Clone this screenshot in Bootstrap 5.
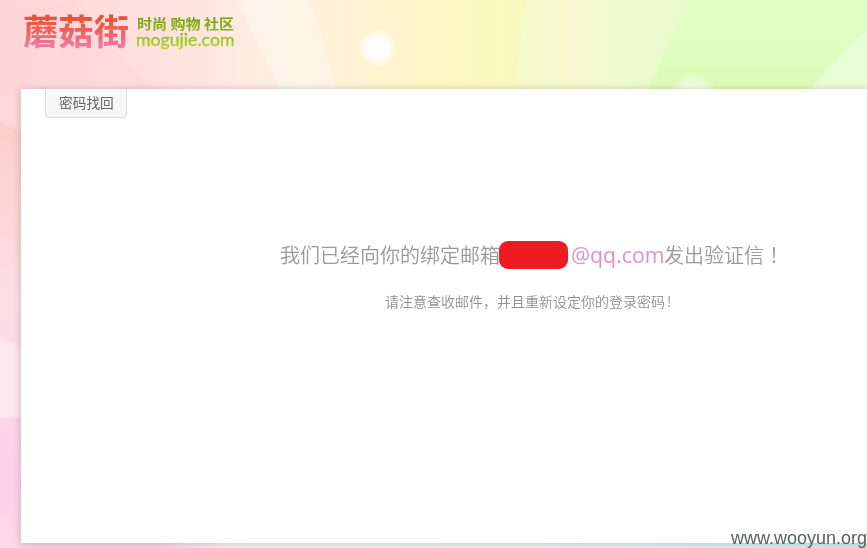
<!DOCTYPE html>
<html lang="zh-CN">
<head>
<meta charset="utf-8">
<meta name="viewport" content="width=device-width, initial-scale=1">
<title>蘑菇街 - 密码找回</title>
<link rel="stylesheet" href="https://cdn.jsdelivr.net/npm/bootstrap@5.3.0/dist/css/bootstrap.min.css">
<style>
body { font-family: "Liberation Sans", "Noto Sans CJK SC", sans-serif; color: #999; }
.stage { display: grid; grid-template: 548px / 867px; width: 867px; }
.stage > * { grid-area: 1 / 1; }
.page-head { height: 89px; padding: 8px 0 0 20px; }
.sheet { height: 454px; margin-left: 21px; box-shadow: 0 1px 8px rgba(90, 80, 80, .32); }
.tab-label { width: 82px; height: 29px; margin-left: 24px; background: #f7f7f7; border: 1px solid #ddd; border-top: 0; border-radius: 0 0 4px 4px; font-size: 13.7px; line-height: 29px; color: #666; padding-left: 13px; white-space: nowrap; }
.notice { margin: 121px 0 0 259px; height: 32px; line-height: 32px; font-size: 20px; font-weight: 350; font-family: "Noto Sans CJK SC", sans-serif; white-space: nowrap; }
.redacted { width: 69px; height: 28px; margin: 0 3px 0 -1px; background: #ed1c24; border-radius: 9px; }
.mail-host { width: 93px; color: #e890bd; font: 21.3px/32px "Open Sans", sans-serif; }
.centred-mark { font-family: "Noto Sans CJK TC", sans-serif; }
.hint { margin: 18px 0 0 364px; font-size: 14px; line-height: 24px; font-weight: 350; font-family: "Noto Sans CJK SC", sans-serif; color: #909090; white-space: nowrap; }
.hint span { margin-left: 2px; }
.watermark { align-self: end; justify-self: end; font-size: 18px; line-height: 20px; color: #5b6062; z-index: 1; }
</style>
<script src="https://cdn.jsdelivr.net/npm/bootstrap@5.3.0/dist/js/bootstrap.bundle.min.js"></script>
</head>
<body class="overflow-hidden">
<div class="stage overflow-hidden">
  <svg width="867" height="548" aria-hidden="true">
    <defs>
      <linearGradient id="sky"><stop offset="0" stop-color="#fed8da"/><stop offset=".18" stop-color="#fee0de"/><stop offset=".28" stop-color="#feebe2"/><stop offset=".38" stop-color="#fef1d9"/><stop offset=".46" stop-color="#fef5cb"/><stop offset=".55" stop-color="#fbf8bf"/><stop offset=".61" stop-color="#f8f9be"/><stop offset=".66" stop-color="#f6f9cf"/><stop offset=".72" stop-color="#effacf"/><stop offset=".8" stop-color="#e8fbcd"/><stop offset="1" stop-color="#e2fcc6"/></linearGradient>
      <linearGradient id="side" x2="0" y2="1"><stop offset="0" stop-color="#fccdcd"/><stop offset=".35" stop-color="#fdd5d5"/><stop offset=".7" stop-color="#fddde5"/><stop offset="1" stop-color="#fddbe8"/></linearGradient>
      <linearGradient id="foot"><stop offset="0" stop-color="#fbd6e5"/><stop offset=".16" stop-color="#fbd6e5"/><stop offset=".25" stop-color="#f9f8f8"/><stop offset=".6" stop-color="#f1f6f5"/><stop offset=".85" stop-color="#dcf4f6"/><stop offset="1" stop-color="#d0f0f5"/></linearGradient>
      <linearGradient id="pinkfoot" x2="0" y2="1"><stop offset="0" stop-color="#fdd5e8"/><stop offset=".5" stop-color="#fdd0e5"/><stop offset="1" stop-color="#fddae9"/></linearGradient>
      <linearGradient id="green" x2="0" y2="1"><stop offset="0" stop-color="#e4fdc6"/><stop offset="1" stop-color="#dcfcb6"/></linearGradient>
      <radialGradient id="glow"><stop offset="0" stop-color="#fff"/><stop offset=".45" stop-color="#fff" stop-opacity=".96"/><stop offset="1" stop-color="#fff" stop-opacity="0"/></radialGradient>
      <filter id="soft" color-interpolation-filters="sRGB"><feGaussianBlur stdDeviation="1.5"/></filter>
    </defs>
    <rect width="867" height="548" fill="url(#sky)"/>
    <g filter="url(#soft)">
      <path d="M0 0h72L155 95H0z" fill="#fed2d5" opacity=".3"/>
      <path d="M236-4h72L339 95H283L249 25z" fill="#fff8ee" opacity=".65"/>
      <path d="M526-4h30L558 95H514z" fill="#f3fbd2" opacity=".65"/>
      <path d="M691-4H875V95H645z" fill="url(#green)"/>
      <path d="M875 20V95H804z" fill="#e9fdd7"/>
      <path d="M-4 120L25 134V360H-4z" fill="url(#side)"/>
      <path d="M-4 338L25 347V420H-4z" fill="#fde7ef"/>
      <path d="M-4 417H25V552H-4z" fill="url(#pinkfoot)"/>
    </g>
    <path d="M21 536H867v12H21z" fill="url(#foot)"/>
    <circle cx="378" cy="48" r="20" fill="url(#glow)"/>
    <ellipse cx="694" cy="92" rx="24" ry="18" fill="url(#glow)" opacity=".65"/>
  </svg>
  <div class="d-flex flex-column">
    <header class="page-head">
      <svg class="overflow-visible" width="225" height="60" role="img" aria-label="蘑菇街">
        <defs><linearGradient id="ink" gradientUnits="userSpaceOnUse" x1="0" y1="7" x2="0" y2="40"><stop offset="0" stop-color="#e7522c"/><stop offset=".5" stop-color="#ec625e"/><stop offset="1" stop-color="#ef7ca9"/></linearGradient>
        <linearGradient id="leaf" gradientUnits="userSpaceOnUse" x1="0" y1="8" x2="0" y2="42"><stop offset="0" stop-color="#729f08"/><stop offset=".5" stop-color="#8cb71a"/><stop offset="1" stop-color="#b7d936"/></linearGradient></defs>
        <text x="3" y="37" font-family="Noto Sans CJK SC" font-size="35.5" font-weight="700" textLength="106" lengthAdjust="spacingAndGlyphs" fill="url(#ink)">蘑菇街</text>
        <g fill="url(#leaf)"><text x="117" y="21" font-family="Noto Sans CJK SC" font-size="13.5" font-weight="700" textLength="97" lengthAdjust="spacingAndGlyphs">时尚 购物 社区</text>
        <text x="116" y="37.5" font-family="Lato" font-size="17.5" font-weight="400" textLength="98.5" lengthAdjust="spacingAndGlyphs" stroke="url(#leaf)" stroke-width=".4">mogujie.com</text></g>
      </svg>
    </header>
    <main class="sheet bg-white">
      <div class="tab-label">密码找回</div>
      <div class="notice d-flex align-items-center"><span>我们已经向你的绑定邮箱</span><span class="redacted"></span><span class="mail-host">@qq.com</span><span>发出验证信<span class="centred-mark" lang="zh-TW">！</span></span></div>
      <p class="hint mb-0">请注意查收邮件，并且重新设定你的登录密码<span>!</span></p>
    </main>
  </div>
  <div class="watermark">www.wooyun.org</div>
</div>
</body>
</html>
